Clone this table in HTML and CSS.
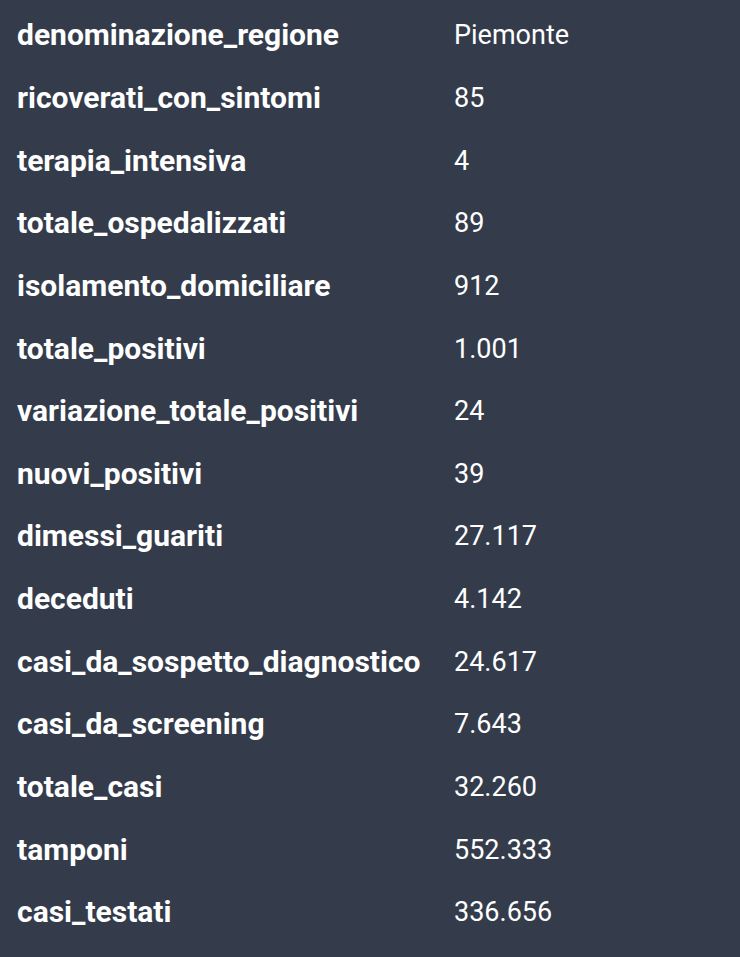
FILE: index.html
```html
<!DOCTYPE html>
<html lang="it">
<head>
<meta charset="utf-8">
<link rel="stylesheet" href="styles.css">
</head>
<body>
<table class="data">
<tbody>
<tr><th>denominazione_regione</th><td>Piemonte</td></tr>
<tr><th>ricoverati_con_sintomi</th><td>85</td></tr>
<tr><th>terapia_intensiva</th><td>4</td></tr>
<tr><th>totale_ospedalizzati</th><td>89</td></tr>
<tr><th>isolamento_domiciliare</th><td>912</td></tr>
<tr><th>totale_positivi</th><td>1.001</td></tr>
<tr><th>variazione_totale_positivi</th><td>24</td></tr>
<tr><th>nuovi_positivi</th><td>39</td></tr>
<tr><th>dimessi_guariti</th><td>27.117</td></tr>
<tr><th>deceduti</th><td>4.142</td></tr>
<tr><th>casi_da_sospetto_diagnostico</th><td>24.617</td></tr>
<tr><th>casi_da_screening</th><td>7.643</td></tr>
<tr><th>totale_casi</th><td>32.260</td></tr>
<tr><th>tamponi</th><td>552.333</td></tr>
<tr><th>casi_testati</th><td>336.656</td></tr>
</tbody>
</table>
</body>
</html>
```
FILE: styles.css
```css
html, body {
  margin: 0;
  padding: 0;
  background: #343c4c;
  height: 100%;
}
body {
  font-family: Roboto, "Liberation Sans", sans-serif;
  color: #ffffff;
  padding-top: 4px;
}
.data {
  border-collapse: collapse;
  border-spacing: 0;
}
.data tr {
  height: 62.65px;
}
.data th,
.data td {
  padding: 0;
  line-height: 30px;
  vertical-align: middle;
  text-align: left;
  white-space: nowrap;
}
.data th {
  font-size: 30px;
  font-weight: 700;
  padding-left: 17px;
  width: 420px;
}
.data td {
  font-size: 27px;
  font-weight: 400;
  padding-left: 17px;
}
```
